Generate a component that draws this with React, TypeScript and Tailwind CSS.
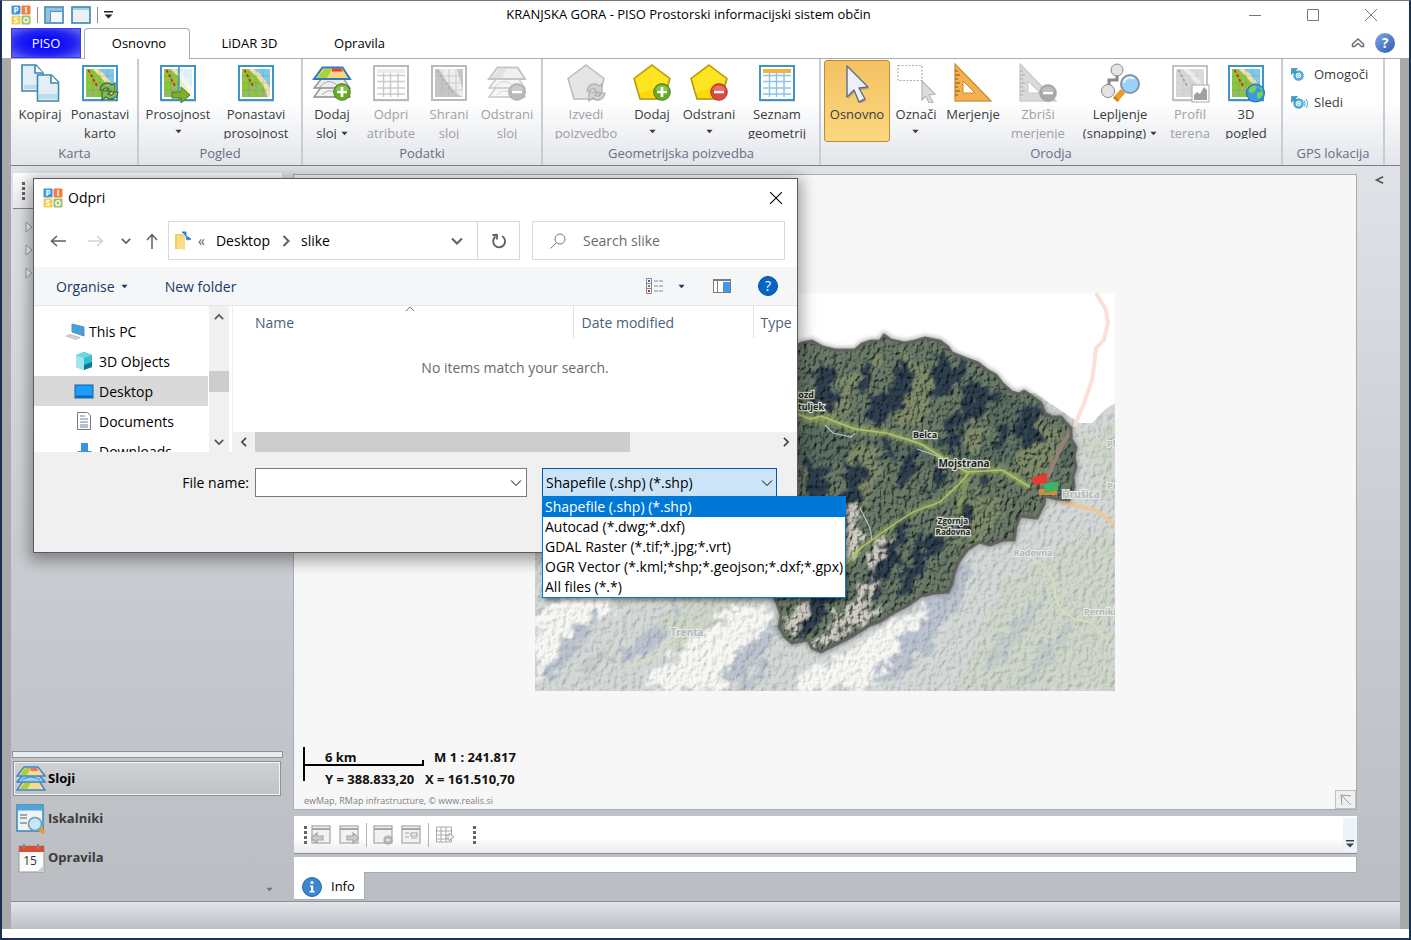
// App.tsx
import type { ReactNode } from "react";
import clsx from "clsx";

type IconProps = { className?: string };

/* ---------- small shared glyphs ---------- */

function Logo({ className }: IconProps) {
  return (
    <svg viewBox="0 0 20 20" className={clsx("w-5 h-5 shrink-0", className)} fontFamily="Open Sans, sans-serif" fontWeight="700" fontSize="8" textAnchor="middle" fill="#fff">
      <rect x="0.500" y="0.500" width="9" height="9" rx="1" fill="#3f97dd" />
      <rect x="10.500" y="0.500" width="9" height="9" rx="1" fill="#ef7f45" />
      <rect x="0.500" y="10.500" width="9" height="9" rx="1" fill="#f4cd55" />
      <rect x="10.500" y="10.500" width="9" height="9" rx="1" fill="#9cc26a" />
      <text x="5" y="8">P</text>
      <text x="15" y="8">I</text>
      <text x="5" y="18">S</text>
      <text x="15" y="18">O</text>
    </svg>
  );
}

function Caret({ className }: IconProps) {
  return (
    <svg viewBox="0 0 8 5" className={clsx("w-[7px] h-[5px]", className)}>
      <path d="M0.5 0.5h7L4 4.5z" fill="currentColor" />
    </svg>
  );
}

function Chevron({ d, className, width = 1.5 }: IconProps & { d: string; width?: number }) {
  return (
    <svg viewBox="0 0 12 12" className={clsx("w-3 h-3", className)} fill="none" stroke="currentColor" strokeWidth={width}>
      <path d={d} />
    </svg>
  );
}

const DOWN = "M1 3.5l5 5 5-5";
const UP = "M1 8.5l5-5 5 5";
const LEFT = "M8.5 1l-5 5 5 5";
const RIGHT = "M3.5 1l5 5-5 5";

/* ---------- ribbon icons, all on a 40 x 40 grid ---------- */

function Svg40({ children }: { children: ReactNode }) {
  return <svg viewBox="0 0 40 40" className="w-10 h-10 shrink-0" fill="none">{children}</svg>;
}

function MapTile() {
  return (
    <>
      <rect x="3" y="4" width="35" height="35" fill="#000" opacity=".15" />
      <rect x="3" y="3" width="34" height="34" fill="#fff" stroke="#3f95c9" strokeWidth="2" />
      <rect x="6" y="6" width="28" height="28" fill="#8cc63f" />
      <path d="M12 6h22v28h-3C30 24 22 14 12 6z" fill="#f5deb0" />
      <path d="M18 6h16v20C31 18 25 11 18 6z" fill="#7cc8ee" />
      <path d="M6 13h28M6 20h28M6 27h28M13 6v28M20 6v28M27 6v28" stroke="#3c7d4a" strokeWidth=".6" opacity=".35" />
      <path d="M6 32l8-3 4-4 5 2 8 7" stroke="#a5a5a5" strokeWidth="1.800" />
      <path d="M8.500 7l9 17" stroke="#e02020" strokeWidth="1.800" strokeDasharray="3 2" />
    </>
  );
}

function Pentagon() {
  return (
    <>
      <path d="M20 3.500L38 17l-6 20H8L2 17z" fill="#000" opacity=".18" />
      <path d="M20 2L38 15.500 32 36H8L2 15.500z" fill="#fcd80c" stroke="#b09a12" strokeWidth="1.500" />
      <path d="M20 4L36 16 34 22 7 30 4 16z" fill="#ffee30" opacity=".6" />
    </>
  );
}

function Badge({ color, plus, cx = 30, cy = 29 }: { color: string; plus?: boolean; cx?: number; cy?: number }) {
  return (
    <g transform={`translate(${cx} ${cy})`}>
      <circle r="8.500" fill={color} stroke="#00000055" />
      <path d="M-6.500-2a7 7 0 0 1 13 0z" fill="#fff" opacity=".25" />
      <path d={plus ? "M-5 0H5M0-5V5" : "M-5 0H5"} stroke="#fff" strokeWidth="2.600" />
    </g>
  );
}

function RefreshArrows() {
  return (
    <g stroke="#3f6b26" strokeWidth="1.200" fill="#86b560">
      <path d="M20 27c1-7 8-9 12-5l3-2v9h-9l3-3c-3-2-5-1-6 1z" />
      <path d="M38 29c-1 7-8 9-12 5l-4 3v-9h9l-3 3c3 2 5 1 6-2z" />
    </g>
  );
}

function Layers({ color = true }: { color?: boolean }) {
  return (
    <>
      <path d="M10 23h21l7 11H2z" fill="#f2f2f2" stroke="#8c8c8c" strokeWidth="1.300" />
      <path d="M10 15h21l7 10H2z" fill="#ececec" stroke="#8c8c8c" strokeWidth="1.300" />
      <path d="M8 24c6-8 13-6 18-1M10 32c6-7 12-4 16 0" stroke="#aaa" />
      <path d="M10.500 4.500h20L38 16H2z" fill={color ? "#f7d77c" : "#e4e4e4"} stroke={color ? "#2f79c4" : "#8c8c8c"} strokeWidth="2" />
      <path d="M12 6h8l-5 9H5z" fill={color ? "#a6d33a" : "#c5c5c5"} />
      {color && <path d="M20 5.500h9l2 3H20z" fill="#e33b2e" />}
    </>
  );
}

function CopyIcon() {
  return (
    <Svg40>
      <path d="M2 2h14l7 8v18H2z" fill="#e3eff5" stroke="#3f87ae" strokeWidth="1.600" />
      <path d="M15 2v8h8" fill="#fff" stroke="#3f87ae" strokeWidth="1.600" />
      <path d="M4 22h17v4H4z" fill="#bcdcec" />
      <path d="M17.500 12h14l7 7v19h-21z" fill="#e3eff5" stroke="#3f87ae" strokeWidth="1.600" />
      <path d="M31 12v8h7.500" fill="#fff" stroke="#3f87ae" strokeWidth="1.600" />
      <path d="M19 31h18v5H19z" fill="#bcdcec" />
    </Svg40>
  );
}

const ResetMapIcon = () => <Svg40><MapTile /><RefreshArrows /></Svg40>;
const MapIcon = () => <Svg40><MapTile /></Svg40>;

function TransparencyIcon() {
  return (
    <Svg40>
      <MapTile />
      <path d="M21 6h13v28H21z" fill="#fff" opacity=".75" />
      <path d="M21 3v34" stroke="#3f95c9" strokeWidth="1.500" />
      <path d="M14 29h9v-5l9 8-9 8v-5h-9z" fill="#7fae2b" stroke="#4c7a1c" />
    </Svg40>
  );
}

const AddLayerIcon = () => <Svg40><Layers /><Badge color="#64ad1e" plus /></Svg40>;
const RemoveLayerIcon = () => <Svg40><Layers color={false} /><Badge color="#777" /></Svg40>;

function TableIcon({ head = "#f3b13c", line = "#8cc4e6", frame = "#3f95c9" }) {
  return (
    <Svg40>
      <rect x="3" y="4" width="35" height="35" fill="#000" opacity=".12" />
      <rect x="3" y="3" width="34" height="34" fill="#fff" stroke={frame} strokeWidth="2" />
      <rect x="6" y="6" width="28" height="4" fill={head} />
      <path d="M6 12.500h28M6 18.500h28M6 25h28M6 31h28M12.500 10v24M19.500 10v24M27 10v24" stroke={line} strokeWidth="1.500" />
    </Svg40>
  );
}

function SaveLayerIcon() {
  return (
    <Svg40>
      <rect x="3" y="3" width="34" height="34" fill="#fff" stroke="#777" strokeWidth="2" />
      <rect x="6" y="6" width="28" height="28" fill="#8f8f8f" />
      <path d="M10 6h18L34 28v6C25 30 17 18 10 6z" fill="#dcdcdc" />
      <path d="M6 13h28M6 20h28M6 27h28M13 6v28M20 6v28M27 6v28" stroke="#777" strokeWidth=".6" />
      <path d="M8 8l16 22" stroke="#555" strokeWidth="1.500" strokeDasharray="2 3" />
    </Svg40>
  );
}

const RunQueryIcon = () => (
  <Svg40>
    <path d="M20 2L38 15.500 32 36H8L2 15.500z" fill="#ccc" stroke="#777" strokeWidth="1.500" />
    <g transform="translate(1 1)"><RefreshArrows /></g>
  </Svg40>
);
const AddGeometryIcon = () => <Svg40><Pentagon /><Badge color="#64ad1e" plus /></Svg40>;
const RemoveGeometryIcon = () => <Svg40><Pentagon /><Badge color="#e2453a" /></Svg40>;

const POINTER = "M10 3l21 21-9 1 6 11-6 3-5-12-7 7z";

const PointerIcon = () => (
  <Svg40>
    <path d={POINTER} fill="#00000030" transform="translate(1 2)" />
    <path d={POINTER} fill="#eef0f7" stroke="#5f6c8e" strokeWidth="1.400" strokeLinejoin="round" />
  </Svg40>
);

const SelectIcon = () => (
  <Svg40>
    <path d="M2 2.500h24v15H2z" stroke="#b0b0b0" strokeDasharray="2 1.500" strokeWidth="1.200" />
    <path d="M26 18l13 13-6 1 4 7-4 1-3-7-4 4z" fill="#dcdcdc" stroke="#b5b5b5" strokeWidth="1.200" />
  </Svg40>
);

function TriangleRuler() {
  return (
    <>
      <path d="M2 3.500L39 39H2z" fill="#00000025" />
      <path d="M2 1l36 37H2z" fill="#f3b04e" stroke="#cc8b30" strokeWidth="1.200" />
      <path d="M10 18l12 12H10z" fill="#fff" stroke="#cc8b30" />
      <path d="M2 8h3M2 12h5M2 16h3M2 20h5M2 24h3M2 28h5M2 32h3" stroke="#8b5411" />
    </>
  );
}

const MeasureIcon = () => <Svg40><TriangleRuler /></Svg40>;
const ClearMeasureIcon = () => <Svg40><TriangleRuler /><Badge color="#555" cy={30} /></Svg40>;

const SnapIcon = () => (
  <Svg40>
    <path d="M17 8v9h-8v9" stroke="#888" strokeWidth="3" />
    <circle cx="17" cy="7" r="6" fill="#e3e3e3" stroke="#888" />
    <circle cx="8" cy="28" r="6.500" fill="#e3e3e3" stroke="#888" />
    <path d="M23 28l-8 9" stroke="#eb9a22" strokeWidth="6" />
    <path d="M14 34l5 4" stroke="#c6710c" strokeWidth="1.500" />
    <circle cx="30" cy="21" r="9" fill="#9ad3f7" stroke="#8296a8" strokeWidth="2" />
    <path d="M24 20a6 6 0 0 1 10-4" stroke="#e7f6ff" strokeWidth="2" />
  </Svg40>
);

const ProfileIcon = () => (
  <Svg40>
    <MapTile />
    <rect x="22" y="22" width="17" height="17" fill="#fff" stroke="#555" />
    <path d="M24 37v-5l3-3 3 2 4-7 3 3v10z" fill="#444" />
  </Svg40>
);

const GlobeMapIcon = () => (
  <Svg40>
    <MapTile />
    <circle cx="29.500" cy="30" r="9" fill="#3b9ae0" stroke="#1d6aa8" />
    <path d="M23 26c3-4 6-4 8-2l-2 4-2 2-4-1zM31 30l5-2 1 4-4 4-2-2zM33 23l4 3-2 1z" fill="#7ed04a" />
  </Svg40>
);

function TargetIcon({ waves }: { waves?: boolean }) {
  return (
    <svg viewBox="0 0 17 14" className="w-[17px] h-[14px] shrink-0" fill="none">
      <circle cx="7.500" cy="7.500" r="4" fill="#fff" stroke="#4da9dc" strokeWidth="2.500" />
      <circle cx="7.500" cy="7.500" r="1.500" stroke="#4da9dc" strokeWidth=".8" />
      <path d="M0.500 0.500h6l-2 2 1 2-2 1-1.500-1-1.500 2z" fill="#3f9fd0" stroke="#2a7dac" strokeWidth=".6" />
      {waves && <path d="M13 4.500c1.500 2 1.500 4 0 6M15 3c2 3 2 6 0 9" stroke="#3f9fd0" />}
    </svg>
  );
}

/* ---------- ribbon ---------- */

type RibbonItem = {
  lines: string[];
  icon: ReactNode;
  width: string;
  menu?: "inline" | "below";
  disabled?: boolean;
  active?: boolean;
};

type RibbonGroupData = { title: string; pad: string; items: RibbonItem[] };

const groups: RibbonGroupData[] = [
  {
    title: "Karta",
    pad: "pr-[5px]",
    items: [
      { lines: ["Kopiraj"], icon: <CopyIcon />, width: "w-14" },
      { lines: ["Ponastavi", "karto"], icon: <ResetMapIcon />, width: "w-16" },
    ],
  },
  {
    title: "Pogled",
    pad: "pl-px pr-[5px]",
    items: [
      { lines: ["Prosojnost"], icon: <TransparencyIcon />, width: "w-[76px]", menu: "below" },
      { lines: ["Ponastavi", "prosojnost"], icon: <MapIcon />, width: "w-20" },
    ],
  },
  {
    title: "Podatki",
    pad: "pl-px pr-[3px]",
    items: [
      { lines: ["Dodaj", "sloj"], icon: <AddLayerIcon />, width: "w-14", menu: "inline" },
      { lines: ["Odpri", "atribute"], icon: <TableIcon head="#ddd" line="#999" frame="#777" />, width: "w-[62px]", disabled: true },
      { lines: ["Shrani", "sloj"], icon: <SaveLayerIcon />, width: "w-[54px]", disabled: true },
      { lines: ["Odstrani", "sloj"], icon: <RemoveLayerIcon />, width: "w-[62px]", disabled: true },
    ],
  },
  {
    title: "Geometrijska poizvedba",
    pad: "pl-[7px] pr-px",
    items: [
      { lines: ["Izvedi", "poizvedbo"], icon: <RunQueryIcon />, width: "w-[72px]", disabled: true },
      { lines: ["Dodaj"], icon: <AddGeometryIcon />, width: "w-[60px]", menu: "below" },
      { lines: ["Odstrani"], icon: <RemoveGeometryIcon />, width: "w-[54px]", menu: "below" },
      { lines: ["Seznam", "geometrij"], icon: <TableIcon />, width: "w-[82px]" },
    ],
  },
  {
    title: "Orodja",
    pad: "pl-[3px] pr-px",
    items: [
      { lines: ["Osnovno"], icon: <PointerIcon />, width: "w-[66px]", active: true },
      { lines: ["Označi"], icon: <SelectIcon />, width: "w-[52px]", menu: "below" },
      { lines: ["Merjenje"], icon: <MeasureIcon />, width: "w-[62px]" },
      { lines: ["Zbriši", "merjenje"], icon: <ClearMeasureIcon />, width: "w-[68px]", disabled: true },
      { lines: ["Lepljenje", "(snapping)"], icon: <SnapIcon />, width: "w-24", menu: "inline" },
      { lines: ["Profil", "terena"], icon: <ProfileIcon />, width: "w-11", disabled: true },
      { lines: ["3D", "pogled"], icon: <GlobeMapIcon />, width: "w-[68px]" },
    ],
  },
];

function RibbonButton({ item }: { item: RibbonItem }) {
  const last = item.lines.length - 1;
  return (
    <button
      disabled={item.disabled}
      className={clsx(
        "flex flex-col items-center gap-[2px] h-[82px] pt-[2px] text-[13px] leading-[19px] rounded-[3px] border whitespace-nowrap",
        item.width,
        item.active ? "border-[#c28a30] bg-linear-to-b from-[#f3c263] to-[#fad77e]" : "border-transparent",
        item.disabled ? "text-[#a0a0a0]" : "text-[#3b3b3b]",
      )}
    >
      <span className={clsx("shrink-0", item.disabled && "grayscale opacity-50")}>{item.icon}</span>
      <span className="flex flex-col items-center h-[34px] overflow-hidden shrink-0">
        {item.lines.map((line, i) => (
          <span key={line} className="flex items-center gap-1">
            {line}
            {item.menu === "inline" && i === last && <Caret />}
          </span>
        ))}
        {item.menu === "below" && <span className="flex h-[19px] items-center"><Caret /></span>}
      </span>
    </button>
  );
}

function RibbonGroup({ title, pad, children }: { title: string; pad: string; children: ReactNode }) {
  return (
    <section className="flex flex-col border-r-2 border-[#c9cdd3]">
      <div className={clsx("flex flex-1 pt-px", pad)}>{children}</div>
      <h2 className="pb-px text-center text-[13px] leading-[22px] text-[#67707f]">{title}</h2>
    </section>
  );
}

function Ribbon() {
  return (
    <div className="flex h-[108px] pl-px shrink-0 border-t border-[#a9adb1] border-b border-b-[#7d8186] bg-linear-to-b from-white from-40% to-[#e2e5ea]">
      {groups.map((g) => (
        <RibbonGroup key={g.title} title={g.title} pad={g.pad}>
          {g.items.map((item, i) => <RibbonButton key={i} item={item} />)}
        </RibbonGroup>
      ))}
      <RibbonGroup title="GPS lokacija" pad="pl-2 pr-[10px]">
        <div className="flex flex-col w-[82px] pt-px text-[13px] text-[#3b3b3b]">
          <button className="flex items-center gap-[6px] h-7"><TargetIcon />Omogoči</button>
          <button className="flex items-center gap-[6px] h-7"><TargetIcon waves />Sledi</button>
        </div>
      </RibbonGroup>
    </div>
  );
}

/* ---------- title bar and tabs ---------- */

function TitleBar() {
  return (
    <header className="flex items-center h-[27px] shrink-0 px-[9px]">
      <div className="flex items-center w-[140px] gap-[6px]">
        <Logo />
        <span className="w-px h-4 bg-[#8a8a8a]" />
        <svg viewBox="0 0 20 18" className="w-5 h-[18px]">
          <rect x="1" y="1" width="18" height="16" fill="#f3f7fa" stroke="#2f7ea8" strokeWidth="1.500" />
          <path d="M2 2h16v3.500H2zM2 2h4v14H2z" fill="#8fc3df" />
          <path d="M6.500 6v10M6 5.500h12" stroke="#2f7ea8" strokeWidth=".8" />
        </svg>
        <svg viewBox="0 0 20 18" className="w-5 h-[18px] ml-px">
          <rect x="1" y="1" width="18" height="16" fill="#eaf0f3" stroke="#2f7ea8" strokeWidth="1.500" />
          <path d="M2 3h16" stroke="#8fc3df" strokeWidth="1.500" />
        </svg>
        <span className="w-px h-4 bg-[#8a8a8a]" />
        <svg viewBox="0 0 9 8" className="w-[9px] h-2"><path d="M0 0h9v1.500H0zM0.500 3.500h8L4.500 7.500z" fill="#222" /></svg>
      </div>
      <h1 className="flex-1 text-center text-[13px]">KRANJSKA GORA - PISO Prostorski informacijski sistem občin</h1>
      <div className="flex text-[#777]">
        <button aria-label="Minimise" className="flex justify-center w-[58px]"><svg viewBox="0 0 12 12" className="w-3 h-3"><path d="M0 6.500h12" stroke="currentColor" /></svg></button>
        <button aria-label="Maximise" className="flex justify-center w-[58px]"><svg viewBox="0 0 12 12" className="w-3 h-3"><path d="M.5.5h11v11H.5z" fill="none" stroke="currentColor" /></svg></button>
        <button aria-label="Close" className="flex justify-center w-[58px]"><svg viewBox="0 0 12 12" className="w-3 h-3"><path d="M0 0l12 12M12 0L0 12" stroke="currentColor" /></svg></button>
      </div>
    </header>
  );
}

function TabBar() {
  return (
    <nav className="flex h-[30px] shrink-0 px-[9px] text-[13px]">
      <button className="w-[70px] mr-[3px] pt-px border border-[#3a3ad8] text-white bg-[radial-gradient(ellipse_at_center,#0505ff_20%,#2424f0_60%,#6a6af5_100%)]">PISO</button>
      <button className="relative z-10 w-[106px] -mb-px pl-1 border border-b-0 border-[#a9adb1] rounded-t-[4px] bg-white">Osnovno</button>
      <button className="w-[119px] pt-px">LiDAR 3D</button>
      <button className="w-[101px] pt-px">Opravila</button>
      <div className="flex items-center gap-[10px] ml-auto mr-[5px]">
        <button aria-label="Collapse ribbon">
          <svg viewBox="0 0 14 12" className="w-[14px] h-3" fill="#fff" stroke="#6d7278" strokeWidth="1.500"><path d="M1.500 7L7 2l5.500 5v2.500h-2L7 6.500 3.500 9.500h-2z" /></svg>
        </button>
        <button aria-label="Help" className="w-5 h-5 rounded-full bg-linear-to-br from-[#7fa5e6] to-[#2c5cb2] text-white text-[14px] leading-5 font-bold">?</button>
      </div>
    </nav>
  );
}

/* ---------- side panel ---------- */

function SlojiIcon() {
  return (
    <svg viewBox="0 0 30 26" className="w-[30px] h-[26px]">
      <path d="M7 15h16l6 9H1z" fill="#f5dc8a" stroke="#3b86c8" strokeWidth="1.500" />
      <path d="M8 17h7l-4 6H4z" fill="#a9cf3b" />
      <path d="M7 9h16l6 7H1z" fill="#9dd0f0" stroke="#3b86c8" strokeWidth="1.500" />
      <path d="M6 14c5-4 12-4 18 0" fill="none" stroke="#3b86c8" />
      <path d="M8 1h14l7 9H1z" fill="#f5dc8a" stroke="#3b86c8" strokeWidth="1.500" />
      <path d="M9 2h6l-4 7H4z" fill="#a9cf3b" />
      <path d="M14 2h7l1 3h-7z" fill="#ee7168" />
    </svg>
  );
}

function IskalnikiIcon() {
  return (
    <svg viewBox="0 0 30 30" className="w-[30px] h-[30px]">
      <rect x="1" y="1" width="26" height="26" fill="#eef3f6" stroke="#3488b8" strokeWidth="1.500" />
      <path d="M1.500 1.500h25v5h-25z" fill="#4da5d8" />
      <path d="M4 11h7M4 14h7M4 19h7" stroke="#8b8f93" strokeWidth="1.500" />
      <path d="M24 25l4 4" stroke="#e69a2f" strokeWidth="4" />
      <circle cx="19" cy="20" r="6.500" fill="#c2e7fa" stroke="#7b98ac" strokeWidth="1.500" />
    </svg>
  );
}

function OpravilaIcon() {
  return (
    <svg viewBox="0 0 30 30" className="w-[30px] h-[30px]">
      <rect x="3" y="3" width="25" height="26" fill="#fafafa" stroke="#9b9b9b" />
      <path d="M3 3h25v6H3z" fill="#dd4b33" />
      <path d="M8 1v5M22 1v5" stroke="#888" strokeWidth="2" />
      <text x="14" y="22" fontSize="12" fontWeight="400" fontFamily="Open Sans, sans-serif" textAnchor="middle" fill="#333">15</text>
      <path d="M28 22v7h-7z" fill="#cfcfcf" />
    </svg>
  );
}

function SidePanel() {
  return (
    <aside className="flex flex-col w-[273px] shrink-0 px-px text-[13px] font-bold text-[#3b3b3b]">
      <div className="flex items-center h-9 pl-[9px] mx-px -mt-px border-b border-[#7d8186] bg-linear-to-b from-white to-[#e6e8ec]">
        <Dots />
      </div>
      <ul className="flex flex-col pt-[6px] pl-[13px]">
        {[0, 1, 2].map((n) => (
          <li key={n} className="flex items-center h-[23px]">
            <svg viewBox="0 0 8 12" className="w-2 h-3"><path d="M1 1l6 5-6 5z" fill="#f5f5f5" stroke="#9a9a9a" /></svg>
          </li>
        ))}
      </ul>
      <div className="h-[7px] mt-auto mb-[3px] border border-[#8e9296] bg-[#e9ebec]" />
      <button className="flex items-center gap-[2px] h-[35px] ml-px mr-[2px] pl-[2px] border border-[#8e9296] bg-linear-to-b from-[#cfd2d5] to-[#bfc2c6] shadow-[inset_0_0_0_1px_#f4f4f4] text-black">
        <SlojiIcon />Sloji
      </button>
      <button className="flex items-center gap-[2px] h-[39px] mt-[3px] pl-1"><IskalnikiIcon />Iskalniki</button>
      <button className="flex items-center gap-[2px] h-[39px] pl-1"><OpravilaIcon />Opravila</button>
      <button aria-label="Configure" className="flex self-end items-center h-6 mr-[10px] text-[#6f7377]"><Caret /></button>
    </aside>
  );
}

function Dots() {
  return (
    <svg viewBox="0 0 3 18" className="w-[3px] h-[18px]" fill="#666">
      <path d="M0 0h3v3H0zM0 5h3v3H0zM0 10h3v3H0zM0 15h3v3H0z" />
    </svg>
  );
}

/* ---------- orthophoto map ---------- */

const BORDER =
  "M180 60L225 66 250 58 267 50 277 48 288 54 300 57 320 57 327 51 336 48 345 48 349 42 356 47 370 50 380 48 390 45 405 48 413 54 417 60 432 66 443 70 452 77 461 82 467 90 477 99 484 101 489 98 498 104 506 110 510 120 517 124 526 124 531 130 536 135 536 146 541 154 539 163 541 174 538 184 539 194 534 207 522 206 510 203 509 211 506 217 502 225 493 224 485 223 481 234 479 247 468 247 455 252 444 249 432 257 424 268 419 280 417 291 413 299 400 300 386 303 372 313 358 320 346 328 335 332 316 344 300 352 286 359 277 355 273 347 257 350 250 344 244 334 246 322 240 305 210 270z";

function OrthoMap() {
  return (
    <svg viewBox="0 0 580 398" className="w-[580px] h-[398px] shrink-0" fill="none" fontFamily="Open Sans, sans-serif" fontWeight="700">
      <defs>
        <filter id="relief" x="0" y="0" width="100%" height="100%" colorInterpolationFilters="sRGB">
          <feTurbulence type="fractalNoise" baseFrequency="0.240 0.180" numOctaves="4" seed="11" result="n" />
          <feDiffuseLighting in="n" surfaceScale="2.500" diffuseConstant="1.250" lightingColor="#fff" result="l">
            <feDistantLight azimuth="225" elevation="52" />
          </feDiffuseLighting>
          <feBlend in="l" in2="SourceGraphic" mode="multiply" result="b" />
          <feComposite in="b" in2="SourceGraphic" operator="in" />
        </filter>
        <filter id="reliefPale" x="0" y="0" width="100%" height="100%" colorInterpolationFilters="sRGB">
          <feTurbulence type="fractalNoise" baseFrequency="0.200 0.160" numOctaves="4" seed="4" result="n" />
          <feDiffuseLighting in="n" surfaceScale="0.600" diffuseConstant="1.250" lightingColor="#fff" result="l">
            <feDistantLight azimuth="225" elevation="52" />
          </feDiffuseLighting>
          <feBlend in="l" in2="SourceGraphic" mode="multiply" result="b" />
          <feComposite in="b" in2="SourceGraphic" operator="in" />
        </filter>
        <filter id="rough" x="-20%" y="-20%" width="140%" height="140%">
          <feTurbulence type="fractalNoise" baseFrequency="0.080" numOctaves="4" seed="7" result="n" />
          <feDisplacementMap in="SourceGraphic" in2="n" scale="30" xChannelSelector="R" yChannelSelector="G" />
          <feGaussianBlur stdDeviation="1" />
        </filter>
        <filter id="edge" x="-5%" y="-5%" width="110%" height="110%"><feGaussianBlur stdDeviation="2" /></filter>
        <clipPath id="muni"><path d={BORDER} /></clipPath>
        <clipPath id="frame"><path d="M0 0h580v398H0z" /></clipPath>
      </defs>
      <g clipPath="url(#frame)">
        <path d="M0 0h580v398H0z" fill="#fff" />
        <g filter="url(#reliefPale)">
          <path d="M0 100H500L545 130 557 130 569 117 580 110V398H0z" fill="#d4d9d7" />
          <g filter="url(#rough)">
            <path d="M0 320L90 262 130 262 60 330 0 390zM100 398L190 310 240 320 180 398zM250 398L300 362 350 335 410 302 425 310 380 350 340 398z" fill="#f7f7f4" />
            <path d="M0 380L60 320 64 326 20 385zM80 370L140 310 150 304 120 356zM185 380L235 330 242 342 205 385zM330 398L390 320 425 265 436 262 428 310 370 380zM10 300l50-30 4 6-50 40zM200 398l30-34 8 8-20 26z" fill="#bac3cf" />
            <path d="M420 398L470 290 560 240H580V398zM120 330L200 280 215 300 140 360zM545 150L580 130V220z" fill="#cfd6ca" />
            <path d="M450 360l60-60 4 6-50 70zM480 390l60-70 6 4-50 70zM40 380l30-26 4 8-24 24z" fill="#c3cccb" />
          </g>
        </g>
        <path d="M495 264l12 8 11 15 3 18 5 12 14 9 17 4 16 17M90 375l30-12 20-18 20-8M140 268l0 20 8 14" stroke="#d5dfbb" strokeWidth="2" />
        <path d="M506 199l24 11 31 7 19 15" stroke="#ecc69c" strokeWidth="4" />
        <path d="M561 0l10 17 2 13-4 17-8 8-2 18-2 14-9 26-9 21" stroke="#fae0d6" strokeWidth="4" />
        <path d={BORDER} stroke="#555" strokeWidth="6" opacity=".45" filter="url(#edge)" />
        <g clipPath="url(#muni)">
          <g filter="url(#relief)">
            <path d="M170 30h400v340H170z" fill="#697a68" />
            <g filter="url(#rough)">
              <path d="M250 170L540 170 540 150 400 150 300 140 250 130zM440 90l60 20 20 60-40 0z" fill="#5a6e63" />
              <path d="M370 60l30 15-8 45-24 20-18-30zM490 120l40 20-20 60-30-20zM340 60l14 0-20 30zM420 200l50 10-20 40-30 0zM310 80l14 4-8 40-20 0zM440 120l14 6-10 34-16-4zM320 150l30 6-20 60-20-20z" fill="#7f8c6c" />
              <path d="M282 66l16 8 0 44-18-4zM398 60l26 10 4 24-24 14-8-10zM362 70l18 10-10 34-34 22-8-24 24-14zM436 84l28 14-20 26-14 6-2-20zM488 112l16 6 2 30-18 8-8-18zM415 118l14 4-4 30-20 4zM270 168l20 4 2 36-20 0zM312 166l16 6-2 44-22-6zM364 226l14 0-22 56-26 34-4-30 20-20zM425 212l16 4-6 30-14-6zM262 330l34-54 14-4-24 58-20 20zM390 236l18 14-34 50-14 4zM374 160l14 14-28 22zM466 130l8 4-10 24-8 0zM350 140l10 4-8 26-8-6zM330 70l8 0-4 24-10 4zM452 172l10 4-12 20-8 0zM406 176l10 4-20 20-8-4z" fill="#2e3f50" />
              <path d="M300 208l26 8-2 40-18 24-14-30zM304 322l26-34 14 4-16 24 30-8-70 46-12-4zM248 322l22-14 8 10-20 30zM330 268l18-22 8 4-20 40z" fill="#cfccc2" />
            </g>
          </g>
          <g stroke="#9fb35f" strokeLinejoin="round" opacity=".8" filter="url(#edge)">
            <path d="M262 121l14 5 20 1 24 9 31 4 20 6 15 5 19 12 27 16 35-2 28 17" strokeWidth="6" />
            <path d="M308 274l19-20 31-22 20-13 27-10 20-19 9-10M425 222l1-15 7-22" strokeWidth="4" />
          </g>
          <g stroke="#b0c373" strokeLinejoin="round">
            <path d="M262 121l14 5 10-3 10 4 24 9 31 4 20 6 15 5 19 12 27 16 35-2 28 17" strokeWidth="1.600" />
            <path d="M308 274l19-20 31-22 20-13 27-10 20-19 9-10" strokeWidth="1.300" />
          </g>
          <path d="M290 132l8 8 18 4 4-4M382 156l20 7 18 10M325 215l10 20 2 12" stroke="#b8bfc6" strokeWidth="1.200" />
          <path d="M539 132l-12 20-14 32" stroke="#96827a" strokeWidth="4" />
        </g>
        <path d={BORDER} stroke="#5f5f5c" strokeWidth="3" strokeLinejoin="round" opacity=".9" />
        <path d="M504 196h18v6h-18z" fill="#d38a3c" />
        <path d="M497 184l15-4v10l-14 2z" fill="#e23c35" />
        <path d="M509 191l14-3v9l-13 3z" fill="#3bb464" />
        <g fontSize="9" fill="#1e1e1e" stroke="#d5dbce" strokeWidth="2.500" paintOrder="stroke" textAnchor="middle">
          <text x="390" y="145">Belca</text>
          <text x="429" y="174" fontSize="10">Mojstrana</text>
          <text x="418" y="231" fontSize="8">Zgornja</text>
          <text x="418" y="242" fontSize="8">Radovna</text>
          <text x="279" y="105" textAnchor="end">Gozd</text>
          <text x="289" y="117" textAnchor="end">Martuljek</text>
        </g>
        <g fontSize="9" fill="#b4b8b6" stroke="#e8ebe9" strokeWidth="2" paintOrder="stroke" textAnchor="middle">
          <text x="546" y="205" fontSize="10">Hrušica</text>
          <text x="498" y="263">Radovna</text>
          <text x="152" y="343" fontSize="10">Trenta</text>
          <text x="549" y="322" textAnchor="start">Perniki</text>
          <text x="572" y="154" textAnchor="start">Pl</text>
          <text x="572" y="196" textAnchor="start">Pr</text>
        </g>
      </g>
    </svg>
  );
}

function MapPanel() {
  return (
    <div className="relative flex flex-1 items-center justify-center border border-[#a5aeb1] bg-[#f7f7f7] overflow-hidden">
      <OrthoMap />
      <div className="absolute left-[9px] bottom-px text-[13px] leading-[22px] font-bold text-[#111]">
        <svg viewBox="0 0 122 36" className="absolute left-0 top-0 w-[122px] h-9" fill="none" stroke="#000" strokeWidth="2">
          <path d="M1 1v34M1 19h119v-5" />
        </svg>
        <p className="flex pl-[22px]"><span className="w-[109px]">6 km</span>M 1 : 241.817</p>
        <p className="flex pl-[22px]"><span className="w-[100px]">Y = 388.833,20</span>X = 161.510,70</p>
        <p className="text-[9px] leading-[14px] mt-1 font-normal text-[#808080] pl-px">ewMap, RMap infrastructure, © www.realis.si</p>
      </div>
      <button aria-label="Overview map" className="absolute right-0 bottom-0 flex items-center justify-center w-[21px] h-[19px] border border-[#c3c3c3] bg-[#efefef]">
        <svg viewBox="0 0 12 12" className="w-3 h-3" fill="none" stroke="#999"><path d="M2 11L1 1l10 1M1 1l10 10" /></svg>
      </button>
    </div>
  );
}

/* ---------- lower tool strip ---------- */

function WindowIcon({ children }: { children?: ReactNode }) {
  return (
    <svg viewBox="0 0 20 20" className="w-5 h-5" fill="#f2f2f2" stroke="#a5a5a5" strokeWidth="1.200">
      <rect x="1" y="1" width="18" height="17" />
      <path d="M1 4h18" strokeWidth="2" />
      {children}
    </svg>
  );
}

function InfoStrip() {
  return (
    <>
      <div className="flex items-center h-[38px] mt-[6px] ml-px pl-[10px] shrink-0 border-b border-[#8b8f94] bg-linear-to-b from-white from-60% to-[#e8eaee]">
        <Dots />
        <button aria-label="Previous" className="ml-1"><WindowIcon><path d="M0 13l6-5v3h6v4H6v3z" fill="#ccc" /></WindowIcon></button>
        <button aria-label="Next" className="ml-2"><WindowIcon><path d="M20 13l-6-5v3H8v4h6v3z" fill="#ccc" /></WindowIcon></button>
        <span className="w-px h-6 bg-[#b0b5ba] ml-[7px] mr-[6px]" />
        <button aria-label="Remove"><WindowIcon><circle cx="15" cy="15" r="4" fill="#bbb" /><path d="M13 15h4" stroke="#fff" /></WindowIcon></button>
        <button aria-label="Form" className="ml-2"><WindowIcon><path d="M4 8h4M4 12h4M10 8h6v3h-6zM10 13h6" /></WindowIcon></button>
        <span className="w-px h-6 bg-[#b0b5ba] ml-[7px] mr-[6px]" />
        <button aria-label="Table">
          <svg viewBox="0 0 20 20" className="w-5 h-5" fill="#fff" stroke="#a9a9a9"><path d="M1.500 2h15v15h-15zM1.500 6h15M1.500 10h15M1.500 14h15M6 2v15M11 2v15" /><path d="M14 8l5 4-5 4v-2.500h-3v-3h3z" fill="#eee" /></svg>
        </button>
        <span className="ml-[18px]"><Dots /></span>
        <button aria-label="More tools" className="flex items-end justify-center w-[14px] h-[34px] ml-auto pb-1 bg-[#edf3fc]">
          <svg viewBox="0 0 8 8" className="w-2 h-2" fill="#444"><path d="M0 0h8v1.500H0zM0 3.500h8L4 7.500z" /></svg>
        </button>
      </div>
      <div className="h-[15px] mt-[3px] ml-px shrink-0 bg-white border-r border-[#a5aeb1]" />
      <div className="flex h-[29px] ml-px shrink-0 pb-px">
        <button className="flex items-center gap-[9px] w-[71px] pt-[2px] pl-2 border-r border-b border-[#a5aeb1] bg-white text-[13px]">
          <svg viewBox="0 0 20 20" className="w-5 h-5">
            <circle cx="10" cy="10" r="9.500" fill="#3c86cf" stroke="#2b69a8" />
            <circle cx="10" cy="5.500" r="1.600" fill="#fff" />
            <path d="M8 8.500h3.200V14h1.500v1.500H7.500V14H9v-4H8z" fill="#fff" />
          </svg>
          Info
        </button>
        <div className="flex-1 border-t border-[#a5aeb1]" />
      </div>
    </>
  );
}

/* ---------- open file dialog ---------- */

const places: { name: string; icon: ReactNode; root?: boolean; selected?: boolean }[] = [
  { name: "This PC", root: true, icon: <><path d="M7 3l12 3v9L7 11z" fill="#3ba2e8" stroke="#6f8ba2" /><path d="M1 15l4-1.500 10 3-4 2z" fill="#cfd3d6" stroke="#a8adb1" strokeWidth=".6" /></> },
  { name: "3D Objects", icon: <><path d="M2 4l8-3 8 3v12l-8 3-8-3z" fill="#35bfd0" /><path d="M2 4l8 3v12l-8-3z" fill="#9be7ec" /><path d="M10 14l8-3v5l-8 3z" fill="#12798c" /><path d="M2 4l8-3 8 3-8 3z" fill="#6fd7e0" /></> },
  { name: "Desktop", selected: true, icon: <><rect x="1" y="4" width="18" height="13" fill="#1c9cf5" stroke="#0b62a8" /><path d="M2 15.500h16" stroke="#0a5ea5" strokeWidth="1.500" /></> },
  { name: "Documents", icon: <><path d="M3.500 1.500h10l3 3v14h-13z" fill="#fff" stroke="#7b7b7b" /><path d="M6 5h5M6 8h8M6 11h8M6 14h8M6 16h8" stroke="#5f86a8" /></> },
  { name: "Downloads", icon: <path d="M7 2h7v8h4l-7.500 8L3 10h4z" fill="#3b93dd" /> },
];

const fileTypes = [
  "Shapefile (.shp) (*.shp)",
  "Autocad (*.dwg;*.dxf)",
  "GDAL Raster (*.tif;*.jpg;*.vrt)",
  "OGR Vector (*.kml;*shp;*.geojson;*.dxf;*.gpx)",
  "All files (*.*)",
];

function Arrow({ rotate, className }: { rotate?: string; className?: string }) {
  return (
    <svg viewBox="0 0 16 14" className={clsx("w-4 h-[14px]", rotate, className)} fill="none" stroke="currentColor" strokeWidth="1.500">
      <path d="M1 7h15M7 2L1.500 7 7 12" />
    </svg>
  );
}

function AddressBar() {
  return (
    <div className="flex items-center h-[39px] mt-[5px] mb-[7px] pl-4 pr-3 text-[#5f5f5f]">
      <button aria-label="Back"><Arrow /></button>
      <button aria-label="Forward" disabled className="ml-[22px] text-[#d3d3d3]"><Arrow rotate="rotate-180" /></button>
      <button aria-label="Recent locations" className="ml-[17px]"><Chevron d={DOWN} width={2} className="w-[10px] h-[10px]" /></button>
      <button aria-label="Up" className="ml-[13px]"><Arrow rotate="rotate-90" /></button>
      <div className="flex items-center h-full w-[352px] ml-2 pl-[5px] border border-[#d9d9d9] text-black">
        <svg viewBox="0 0 18 20" className="w-[18px] h-5">
          <path d="M1 3h7l3 2v13H1z" fill="#f2cc64" />
          <path d="M3 4l8 2v13l-8-2z" fill="#fadd86" />
          <path d="M8 1l4 0 0 4zM12 5l5 3-4 1z" fill="#2f86d6" stroke="#2f86d6" />
        </svg>
        <span className="ml-[6px] text-[#5f5f5f]">«</span>
        <span className="ml-[11px]">Desktop</span>
        <Chevron d={RIGHT} className="w-2 h-2 ml-[10px] mr-[9px] text-[#5f5f5f]" width={2} />
        <span>slike</span>
        <button aria-label="Address history" className="ml-auto mr-[14px] text-[#5f5f5f]"><Chevron d={DOWN} width={2} /></button>
        <button aria-label="Refresh" className="flex items-center justify-center w-[42px] h-full border-l border-[#d9d9d9] text-[#5f5f5f]">
          <svg viewBox="0 0 16 16" className="w-4 h-4" fill="none" stroke="currentColor" strokeWidth="1.800"><path d="M11 3a6 6 0 1 1-6.500.5M1.500 2H6v4.500" /></svg>
        </button>
      </div>
      <label className="flex items-center flex-1 h-full ml-3 pl-[17px] border border-[#d9d9d9]">
        <svg viewBox="0 0 16 16" className="w-4 h-4 shrink-0" fill="none" stroke="#777"><circle cx="10" cy="6" r="5" /><path d="M6.500 9.500L.5 15.500" /></svg>
        <input aria-label="Search slike" placeholder="Search slike" className="w-full ml-[17px] outline-none placeholder:text-[#6b6b6b]" />
      </label>
    </div>
  );
}

function DialogToolbar() {
  return (
    <div className="flex items-center h-[39px] pl-[22px] pr-[19px] border-b border-[#e4e7ea] bg-[#f4f6f8] text-[#1c3a66]">
      <button className="flex items-center gap-[6px]">Organise<Caret className="w-2 h-[5px]" /></button>
      <button className="ml-[37px]">New folder</button>
      <button aria-label="Change view" className="ml-auto">
        <svg viewBox="0 0 18 16" className="w-[18px] h-4" fill="none" stroke="#8a8a8a">
          <path d="M.5.500h5v15h-5zM.5 5.500h5M.5 10.500h5M8 3h4M13 3h4M8 8h4M13 8h4M8 13h4M13 13h4" />
          <path d="M2 3h2" stroke="#2a6fc0" strokeWidth="2" /><path d="M2 8h2" stroke="#98823a" strokeWidth="2" /><path d="M2 13h2" stroke="#c43a2c" strokeWidth="2" />
        </svg>
      </button>
      <button aria-label="View options" className="ml-[14px]"><Caret className="w-2 h-[5px]" /></button>
      <button aria-label="Preview pane" className="ml-7">
        <svg viewBox="0 0 18 14" className="w-[18px] h-[14px]"><rect x=".5" y=".5" width="17" height="13" fill="#fff" stroke="#7b7b7b" /><path d="M0 1.500h18M4.500 1v13" stroke="#7b7b7b" /><path d="M10 3h7v10h-7z" fill="#3f9be8" /></svg>
      </button>
      <button aria-label="Help" className="w-5 h-5 ml-[27px] rounded-full bg-[#0467c5] border border-[#04529d] text-white leading-[18px]">?</button>
    </div>
  );
}

function DialogBody() {
  return (
    <div className="flex h-[146px]">
      <ul className="w-[174px] pt-[10px] overflow-hidden">
        {places.map((p) => (
          <li key={p.name} className={clsx("flex items-center h-[30px]", p.root ? "pl-[31px] gap-1" : "pl-10 gap-[5px]", p.selected && "bg-[#d9d9d9]")}>
            <svg viewBox="0 0 20 20" className="w-5 h-5 shrink-0" fill="none">{p.icon}</svg>
            {p.name}
          </li>
        ))}
      </ul>
      <div className="flex flex-col items-center w-5 ml-px bg-[#f0f0f0] text-[#555]">
        <button aria-label="Scroll up" className="flex items-center justify-center h-[21px]"><Chevron d={UP} width={2} className="w-[10px] h-[10px]" /></button>
        <div className="w-full h-[21px] mt-11 bg-[#cdcdcd]" />
        <button aria-label="Scroll down" className="flex items-center justify-center h-[21px] mt-auto"><Chevron d={DOWN} width={2} className="w-[10px] h-[10px]" /></button>
      </div>
      <div className="relative flex flex-col flex-1 ml-[3px] border-l border-[#eee]">
        <Chevron d={UP} width={1} className="absolute left-[172px] -top-[2px] w-[10px] h-[10px] text-[#555]" />
        <table className="w-full table-fixed text-left text-[#4c607a]">
          <thead>
            <tr className="h-8">
              <th className="w-[340px] pl-[22px] font-normal border-r border-[#e2e2e2]">Name</th>
              <th className="w-[180px] pl-2 font-normal border-r border-[#e2e2e2]">Date modified</th>
              <th className="pl-[7px] font-normal">Type</th>
            </tr>
          </thead>
          <tbody>
            <tr className="h-[58px]"><td colSpan={3} className="text-center text-[#6b6b6b]">No items match your search.</td></tr>
          </tbody>
        </table>
        <div className="flex items-center h-5 mt-auto bg-[#f0f0f0] text-[#444]">
          <button aria-label="Scroll left" className="flex items-center justify-center w-[22px]"><Chevron d={LEFT} width={2} className="w-[10px] h-[10px]" /></button>
          <div className="w-[375px] h-5 bg-[#cdcdcd]" />
          <button aria-label="Scroll right" className="flex items-center justify-center w-[22px] ml-auto"><Chevron d={RIGHT} width={2} className="w-[10px] h-[10px]" /></button>
        </div>
      </div>
    </div>
  );
}

function OpenDialog() {
  return (
    <div role="dialog" aria-label="Odpri" className="absolute z-20 left-[31px] top-[177px] w-[765px] border border-[#5b5b5b] bg-white text-[14px] text-black shadow-[0_4px_14px_4px_rgba(0,0,0,0.35)]">
      <div className="flex items-center h-[37px] pl-[9px] pr-[15px]">
        <Logo />
        <h2 className="ml-[5px]">Odpri</h2>
        <button aria-label="Close" className="ml-auto"><svg viewBox="0 0 12 12" className="w-3 h-3"><path d="M0 0l12 12M12 0L0 12" stroke="#000" strokeWidth="1.100" /></svg></button>
      </div>
      <AddressBar />
      <DialogToolbar />
      <DialogBody />
      <form className="flex h-[100px] pt-4 pr-5 items-start bg-[#f0f0f0]">
        <label htmlFor="file-name" className="w-[215px] mr-[6px] text-right leading-[29px]">File name:</label>
        <div className="flex items-center w-[272px] h-[29px] pr-1 border border-[#7a7a7a] bg-white">
          <input id="file-name" className="w-full px-1 outline-none" />
          <Chevron d={DOWN} width={1} className="shrink-0" />
        </div>
        <div className="relative flex items-center flex-1 h-[29px] ml-[15px]">
          <select aria-label="File type" defaultValue={fileTypes[0]} className="w-full h-full pl-[3px] pr-6 border border-[#0058a8] bg-[#cce4f7] appearance-none outline-none">
            {fileTypes.map((t) => <option key={t}>{t}</option>)}
          </select>
          <Chevron d={DOWN} width={1} className="absolute right-1 pointer-events-none" />
          <ul role="listbox" aria-label="File types" className="absolute left-0 top-7 border border-[#0078d7] bg-white whitespace-nowrap shadow-[2px_3px_4px_rgba(0,0,0,0.4)]">
            {fileTypes.map((t, i) => (
              <li key={t} role="option" aria-selected={i === 0} className={clsx("px-[2px] leading-5", i === 0 && "bg-[#0078d7] text-white")}>{t}</li>
            ))}
          </ul>
        </div>
      </form>
    </div>
  );
}

export default function App() {
  return (
    <div className="relative flex flex-col min-h-screen border-x-2 border-b-2 border-t border-[#1b3153] border-t-[#777] bg-white font-['Open_Sans','Noto_Sans',sans-serif] text-black">
      <TitleBar />
      <TabBar />
      <div className="flex flex-col flex-1 px-[9px] mb-[9px] bg-[#a9a9a9]">
        <Ribbon />
        <main className="flex flex-1 pt-2 bg-linear-to-b from-[#dfe2e6] via-[#cacdd2] to-[#babdc1] border-b border-[#8b8f94]">
          <SidePanel />
          <div className="flex flex-col flex-1 ml-[9px]">
            <MapPanel />
            <InfoStrip />
          </div>
          <div className="flex items-start justify-center w-[43px] text-[#555]">
            <button aria-label="Expand panel"><Chevron d="M11 2L3 6l8 4" width={2} className="w-[10px] h-3" /></button>
          </div>
        </main>
        <footer className="h-[27px] shrink-0 bg-linear-to-b from-[#e2e5e9] to-[#bcc0c5]" />
      </div>
      <OpenDialog />
    </div>
  );
}
